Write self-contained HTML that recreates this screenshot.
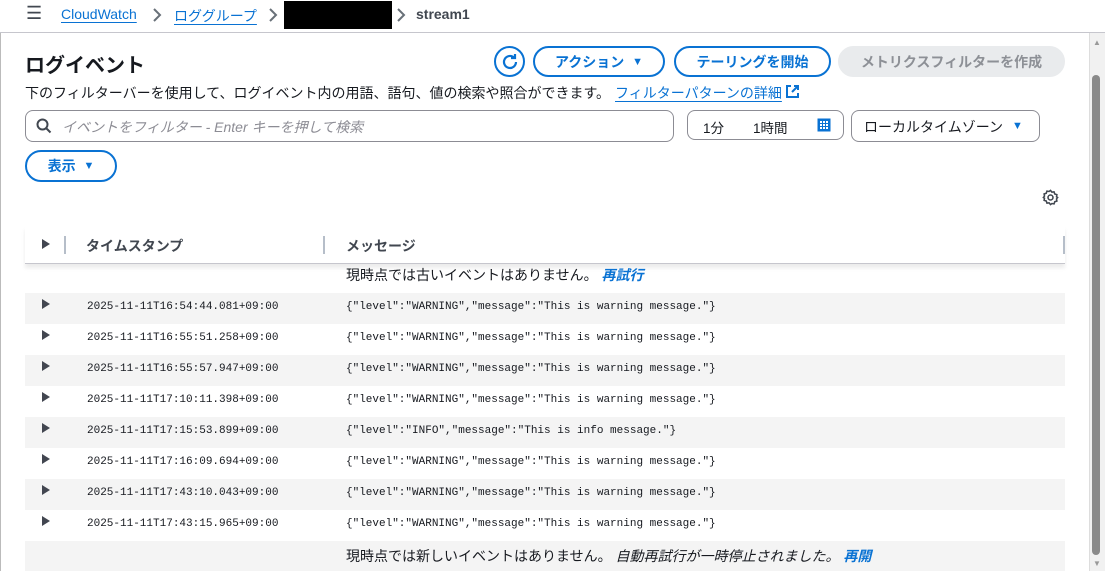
<!DOCTYPE html>
<html><head><meta charset="utf-8"><style>
*{box-sizing:border-box;margin:0;padding:0}
body{width:1105px;height:571px;overflow:hidden;background:#fff;font-family:"Liberation Sans","Noto Sans CJK JP",sans-serif;color:#16191f;position:relative}
.a{position:absolute;white-space:nowrap}
.top{position:absolute;left:0;top:0;width:1105px;height:33px;background:#fff;border-bottom:1px solid #c6c6cd}
.lnk{color:#0972d3;text-decoration:underline;text-underline-offset:3px}
.btn{position:absolute;height:31px;border:2px solid #0972d3;border-radius:16px;color:#0972d3;font-weight:bold;font-size:14px;display:flex;align-items:center;justify-content:center;background:#fff}
.inp{position:absolute;border:1px solid #8c8c94;border-radius:8px;background:#fff;height:32px}
.row{position:absolute;left:25px;width:1040px;height:31px}
.g{background:#f4f4f4}
.tri{position:absolute;left:17px;width:0;height:0;border-left:8px solid #424650;border-top:5px solid transparent;border-bottom:5px solid transparent}
.mono{font-family:"Liberation Mono",monospace;font-size:11px;color:#16191f}
.chev{position:absolute;top:7px}
</style></head><body>
<div style="position:absolute;left:0;top:0;width:1px;height:571px;background:#bbb"></div>
<div class="top">
 <div class="a" style="left:26px;top:3px;font-size:18px;color:#414750">☰</div>
 <div class="a lnk" style="left:61px;top:6px;font-size:14px">CloudWatch</div>
 <svg class="chev" style="left:152px" width="10" height="16" viewBox="0 0 10 16"><path d="M2 2l6 6-6 6" stroke="#687078" stroke-width="2" fill="none"/></svg>
 <div class="a lnk" style="left:174px;top:6px;font-size:14px">ロググループ</div>
 <svg class="chev" style="left:268px" width="10" height="16" viewBox="0 0 10 16"><path d="M2 2l6 6-6 6" stroke="#687078" stroke-width="2" fill="none"/></svg>
 <div class="a" style="left:284px;top:1px;width:108px;height:28px;background:#000"></div>
 <svg class="chev" style="left:396px" width="10" height="16" viewBox="0 0 10 16"><path d="M2 2l6 6-6 6" stroke="#687078" stroke-width="2" fill="none"/></svg>
 <div class="a" style="left:416px;top:6px;font-size:14px;font-weight:bold;color:#414750">stream1</div>
</div>
<div class="a" style="left:25px;top:49px;font-size:20px;font-weight:bold">ログイベント</div>
<div class="a" style="left:25px;top:83px;font-size:14px">下のフィルターバーを使用して、ログイベント内の用語、語句、値の検索や照合ができます。</div>
<div class="a lnk" style="left:615px;top:83px;font-size:14px">フィルターパターンの詳細</div>
<svg class="a" style="left:785px;top:84px" width="15" height="15" viewBox="0 0 15 15"><path d="M6 2H2v11h11V9M9 2h4v4M13 2L7 8" stroke="#0972d3" stroke-width="2" fill="none"/></svg>
<div class="btn" style="left:494px;top:46px;width:31px;border-radius:50%"><svg width="18" height="18" viewBox="0 0 18 18"><path d="M15 9a6 6 0 1 1-2-4.5" stroke="#0972d3" stroke-width="2.2" fill="none"/><path d="M10 5h4V1" stroke="#0972d3" stroke-width="2.2" fill="none"/></svg></div>
<div class="btn" style="left:533px;top:46px;width:132px">アクション&nbsp;&nbsp;<span style="font-size:11px">▼</span></div>
<div class="btn" style="left:674px;top:46px;width:157px">テーリングを開始</div>
<div class="btn" style="left:838px;top:46px;width:227px;border-color:#e9ebed;background:#e9ebed;color:#8d9096">メトリクスフィルターを作成</div>
<div class="inp" style="left:25px;top:110px;width:649px"></div>
<svg class="a" style="left:36px;top:118px" width="16" height="16" viewBox="0 0 16 16"><circle cx="6.5" cy="6.5" r="5" stroke="#414750" stroke-width="2" fill="none"/><path d="M10 10l4.5 4.5" stroke="#414750" stroke-width="2"/></svg>
<div class="a" style="left:62px;top:117px;font-size:14px;font-style:italic;color:#8c8c94">イベントをフィルター - Enter キーを押して検索</div>
<div class="inp" style="left:687px;top:110px;width:157px;height:30px"></div>
<div class="a" style="left:703px;top:117px;font-size:13.5px">1分</div>
<div class="a" style="left:753px;top:117px;font-size:13.5px">1時間</div>
<svg class="a" style="left:817px;top:118px" width="14" height="14" viewBox="0 0 14 14"><rect x="0.5" y="0.5" width="13" height="13" fill="#0972d3"/><g fill="#fff"><rect x="3" y="3" width="2" height="2"/><rect x="6" y="3" width="2" height="2"/><rect x="9" y="3" width="2" height="2"/><rect x="3" y="6" width="2" height="2"/><rect x="6" y="6" width="2" height="2"/><rect x="9" y="6" width="2" height="2"/><rect x="3" y="9" width="2" height="2"/><rect x="6" y="9" width="2" height="2"/><rect x="9" y="9" width="2" height="2"/></g></svg>
<div class="inp" style="left:851px;top:110px;width:189px"></div>
<div class="a" style="left:864px;top:117px;font-size:14px">ローカルタイムゾーン</div>
<div class="a" style="left:1012px;top:120px;font-size:11px;color:#0972d3">▼</div>
<div class="btn" style="left:25px;top:150px;width:92px;height:32px">表示&nbsp;&nbsp;<span style="font-size:11px">▼</span></div>
<svg class="a" style="left:1042px;top:189px" width="17" height="17" viewBox="0 0 24 24"><path d="M12 2l2 2.5 3-.5 1 3 3 1-.5 3L22 12l-1.5 2 .5 3-3 1-1 3-3-.5L12 22l-2-2.5-3 .5-1-3-3-1 .5-3L2 12l1.5-2-.5-3 3-1 1-3 3 .5z" stroke="#414750" stroke-width="2.2" fill="none"/><circle cx="12" cy="12" r="3.5" stroke="#414750" stroke-width="2.2" fill="none"/></svg>
<div class="a" style="left:25px;top:226px;width:1040px;height:38px;border-bottom:1px solid #c6c6cd;box-shadow:0 4px 4px rgba(0,0,0,0.08)"></div>
<div class="tri" style="top:239px;left:42px"></div>
<div class="a" style="left:64px;top:236px;width:2px;height:18px;background:#b6bec9"></div>
<div class="a" style="left:86px;top:236px;font-size:14px;font-weight:bold;color:#414750">タイムスタンプ</div>
<div class="a" style="left:323px;top:236px;width:2px;height:18px;background:#b6bec9"></div>
<div class="a" style="left:346px;top:236px;font-size:14px;font-weight:bold;color:#414750">メッセージ</div>
<div class="a" style="left:1063px;top:236px;width:2px;height:18px;background:#b6bec9"></div>
<div class="a" style="left:346px;top:265px;font-size:14px">現時点では古いイベントはありません。 <i style="color:#0972d3;font-weight:bold">再試行</i></div>

<div class="row g" style="top:293px"><div class="tri" style="top:6px"></div><div class="a mono" style="left:62px;top:8px">2025-11-11T16:54:44.081+09:00</div><div class="a mono" style="left:321px;top:8px">{"level":"WARNING","message":"This is warning message."}</div></div>
<div class="row" style="top:324px"><div class="tri" style="top:6px"></div><div class="a mono" style="left:62px;top:8px">2025-11-11T16:55:51.258+09:00</div><div class="a mono" style="left:321px;top:8px">{"level":"WARNING","message":"This is warning message."}</div></div>
<div class="row g" style="top:355px"><div class="tri" style="top:6px"></div><div class="a mono" style="left:62px;top:8px">2025-11-11T16:55:57.947+09:00</div><div class="a mono" style="left:321px;top:8px">{"level":"WARNING","message":"This is warning message."}</div></div>
<div class="row" style="top:386px"><div class="tri" style="top:6px"></div><div class="a mono" style="left:62px;top:8px">2025-11-11T17:10:11.398+09:00</div><div class="a mono" style="left:321px;top:8px">{"level":"WARNING","message":"This is warning message."}</div></div>
<div class="row g" style="top:417px"><div class="tri" style="top:6px"></div><div class="a mono" style="left:62px;top:8px">2025-11-11T17:15:53.899+09:00</div><div class="a mono" style="left:321px;top:8px">{"level":"INFO","message":"This is info message."}</div></div>
<div class="row" style="top:448px"><div class="tri" style="top:6px"></div><div class="a mono" style="left:62px;top:8px">2025-11-11T17:16:09.694+09:00</div><div class="a mono" style="left:321px;top:8px">{"level":"WARNING","message":"This is warning message."}</div></div>
<div class="row g" style="top:479px"><div class="tri" style="top:6px"></div><div class="a mono" style="left:62px;top:8px">2025-11-11T17:43:10.043+09:00</div><div class="a mono" style="left:321px;top:8px">{"level":"WARNING","message":"This is warning message."}</div></div>
<div class="row" style="top:510px"><div class="tri" style="top:6px"></div><div class="a mono" style="left:62px;top:8px">2025-11-11T17:43:15.965+09:00</div><div class="a mono" style="left:321px;top:8px">{"level":"WARNING","message":"This is warning message."}</div></div>
<div class="row g" style="top:541px;height:30px"><div class="a" style="left:321px;top:5px;font-size:14px">現時点では新しいイベントはありません。 <i>自動再試行が一時停止されました。</i> <i style="color:#0972d3;font-weight:bold">再開</i></div></div>

<div class="a" style="left:1089px;top:33px;width:16px;height:538px;background:#f1f1f1;border-left:1px solid #ddd"></div>
<div class="a" style="left:1093px;top:38px;font-size:8px;color:#999">▲</div>
<div class="a" style="left:1092px;top:75px;width:8px;height:480px;background:#8a8a8a;border-radius:4px"></div>
<div class="a" style="left:1093px;top:559px;font-size:8px;color:#999">▼</div>
</body></html>
